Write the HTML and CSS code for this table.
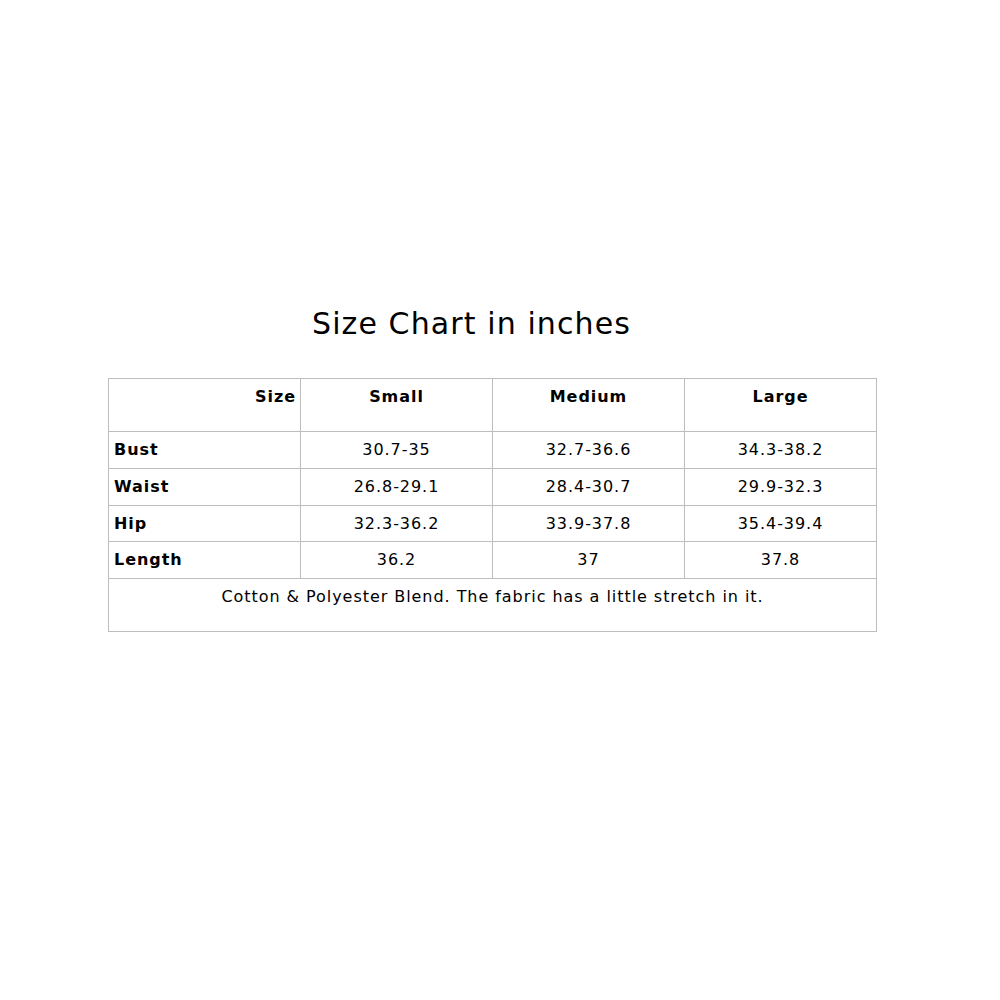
FILE: index.html
```html
<!DOCTYPE html>
<html>
<head>
<meta charset="utf-8">
<link rel="stylesheet" href="styles.css">
</head>
<body>
<div class="wrap">
  <h1 class="title">Size Chart in inches</h1>
  <table class="chart">
    <tr class="head">
      <th class="label">Size</th>
      <th>Small</th>
      <th>Medium</th>
      <th>Large</th>
    </tr>
    <tr><th class="label-left">Bust</th><td>30.7-35</td><td>32.7-36.6</td><td>34.3-38.2</td></tr>
    <tr><th class="label-left">Waist</th><td>26.8-29.1</td><td>28.4-30.7</td><td>29.9-32.3</td></tr>
    <tr><th class="label-left">Hip</th><td>32.3-36.2</td><td>33.9-37.8</td><td>35.4-39.4</td></tr>
    <tr><th class="label-left">Length</th><td>36.2</td><td>37</td><td>37.8</td></tr>
    <tr class="foot"><td colspan="4">Cotton &amp; Polyester Blend. The fabric has a little stretch in it.</td></tr>
  </table>
</div>
</body>
</html>
```
FILE: styles.css
```css
html, body {
  margin: 0;
  padding: 0;
  background: #fff;
}
body {
  font-family: "DejaVu Sans", Verdana, sans-serif;
  color: #000;
}
.wrap {
  padding: 304px 0 0 108px;
}
.title {
  margin: 0 0 34px 204px;
  font-size: 30px;
  letter-spacing: 1.1px;
  font-weight: normal;
  line-height: 40px;
}
.chart {
  border-collapse: collapse;
  width: 769px;
  table-layout: fixed;
  font-size: 16px;
  letter-spacing: 0.95px;
}
.chart th, .chart td {
  border: 1px solid #bdbdbd;
  padding: 8px 5px;
  line-height: 19.75px;
  text-align: center;
  vertical-align: top;
}
.chart th {
  font-weight: bold;
}
.chart .label {
  text-align: right;
  padding-right: 4px;
}
.chart .label-left {
  text-align: left;
}
.head th {
  height: 36px;
}
.foot td {
  height: 36px;
}
```
